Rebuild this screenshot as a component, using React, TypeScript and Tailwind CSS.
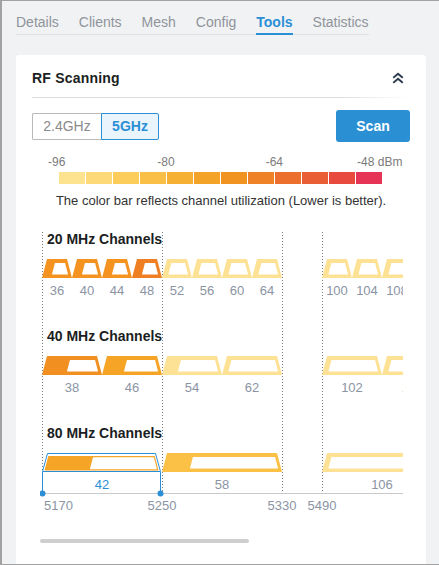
import React from 'react';

const SANS = '"Liberation Sans", Arial, Helvetica, sans-serif';
const LIGHT = '#fde195';
const BLUE = '#2b8fd6';
const LABEL = '#8b94a4';

// chart origin in page coordinates
const OX = 40;
const OY = 225;
const fx = (f: number) => (f <= 5330 ? 42 + (f - 5170) * 1.5 : 322 + (f - 5490) * 1.5) - OX;

type Ch = { n: number; color: string; off: number; sel?: boolean };
type Row = { title: string; base: number; width: number; chans: Ch[] };

const light = (ns: number[], off = 5.5): Ch[] => ns.map((n) => ({ n, color: LIGHT, off }));

const rows: Row[] = [
  {
    title: '20 MHz Channels',
    base: 19,
    width: 20,
    chans: [
      { n: 36, color: '#f4931f', off: 9 },
      { n: 40, color: '#f4931f', off: 9 },
      { n: 44, color: '#f4931f', off: 9 },
      { n: 48, color: '#ef7f23', off: 9 },
      ...light([52, 56, 60, 64, 100, 104, 108, 112, 116, 120, 124, 128, 132, 136, 140, 144]),
    ],
  },
  {
    title: '40 MHz Channels',
    base: 116,
    width: 40,
    chans: [
      { n: 38, color: '#f18f20', off: 24 },
      { n: 46, color: '#f5a426', off: 21 },
      { n: 54, color: LIGHT, off: 15 },
      ...light([62, 102, 110, 118, 126, 134, 142]),
    ],
  },
  {
    title: '80 MHz Channels',
    base: 213,
    width: 80,
    chans: [
      { n: 42, color: '#f5a426', off: 45, sel: true },
      { n: 58, color: '#fbc146', off: 27 },
      ...light([106, 122, 138]),
    ],
  },
];

function Trap({
  x0, x1, top, bot, color, off, r = 3, bt = 4, bb = 3.5,
}: {
  x0: number; x1: number; top: number; bot: number; color: string; off: number; r?: number; bt?: number; bb?: number;
}) {
  const s = 5 * ((bot - top) / 19);
  const h = bot - top;
  const xl = (y: number) => x0 + (s * (bot - y)) / h;
  const xr = (y: number) => x1 - (s * (bot - y)) / h;
  const it = top + bt;
  const ib = bot - bb;
  const outer = `${x0},${bot} ${x0 + s},${top} ${x1 - s},${top} ${x1},${bot}`;
  const inner = `${xl(ib) + off},${ib} ${xl(it) + off},${it} ${xr(it) - r},${it} ${xr(ib) - r},${ib}`;
  return (
    <g>
      <polygon points={outer} fill={color} />
      <polygon points={inner} fill="#fff" />
    </g>
  );
}

function Chart() {
  const ticks = [5170, 5250, 5330, 5490];
  return (
    <svg width={700} height={300} style={{ fontFamily: SANS, display: 'block' }}>
      {/* dotted band separators */}
      {ticks.map((f) => (
        <line key={f} x1={fx(f) + 0.5} x2={fx(f) + 0.5} y1={7} y2={268} stroke="#7d7d7d" strokeDasharray="1 2" />
      ))}
      <line x1={2} x2={700} y1={268.5} y2={268.5} stroke="#c9c9c9" />

      {rows.map((row) => {
        const top = row.base + 15;
        const bot = row.base + 34;
        return (
          <g key={row.title}>
            <text x={7} y={row.base} fontSize={14} fontWeight={700} fill="#1b1e22">
              {row.title}
            </text>
            {row.chans.map((c) => {
              const cf = 5000 + 5 * c.n;
              const x0 = fx(cf - row.width / 2);
              const x1 = fx(cf + row.width / 2);
              const cx = (x0 + x1) / 2;
              return (
                <g key={c.n}>
                  {c.sel ? (
                    <g>
                      <polygon
                        points={`${x0 + 0.5},${bot - 0.5} ${x0 + 5.5},${top + 0.5} ${x1 - 6.5},${top + 0.5} ${x1 - 1.5},${bot - 0.5}`}
                        fill="#fff"
                        stroke={BLUE}
                      />
                      <Trap x0={x0 + 2.5} x1={x1 - 3.5} top={top + 3} bot={bot - 1.5} color={c.color} off={c.off} r={1.2} bt={1.2} bb={1.2} />
                      <line x1={x0 + 0.5} x2={x0 + 0.5} y1={bot} y2={268} stroke={BLUE} />
                      <line x1={x1 - 1.5} x2={x1 - 1.5} y1={bot} y2={268} stroke={BLUE} />
                      <circle cx={x0 + 0.5} cy={268.5} r={3} fill={BLUE} />
                      <circle cx={x1 - 1.5} cy={268.5} r={3} fill={BLUE} />
                    </g>
                  ) : (
                    <Trap x0={x0} x1={x1} top={top} bot={bot} color={c.color} off={c.off} />
                  )}
                  <text x={cx} y={row.base + 51} fontSize={13} textAnchor="middle" fill={c.sel ? BLUE : LABEL}>
                    {c.n}
                  </text>
                </g>
              );
            })}
          </g>
        );
      })}

      <text x={4} y={285} fontSize={13} fill={LABEL}>5170</text>
      {ticks.slice(1).map((f) => (
        <text key={f} x={fx(f)} y={285} fontSize={13} fill={LABEL} textAnchor="middle">
          {f}
        </text>
      ))}
    </svg>
  );
}

const barColors = [
  '#fde290', '#fdd977', '#fccd5b', '#f9bf46', '#f6b135', '#f4a329',
  '#f19320', '#ef8226', '#ec6f2e', '#ea5e35', '#e84b3d', '#e63456',
];

export default function App() {
  const tabs = ['Details', 'Clients', 'Mesh', 'Config', 'Tools', 'Statistics'];
  return (
    <div
      className="box-border h-[565px] w-[439px] overflow-hidden border-t border-b border-l-2 border-[#a2a2a2] bg-[#f1f2f4] pl-[14px] pr-[13px]"
      style={{ fontFamily: SANS }}
    >
      {/* tabs */}
      <div className="mt-[11px] flex w-fit gap-5 border-b border-[#dfe1e5]">
        {tabs.map((t) => (
          <div
            key={t}
            className={`-mb-px border-b-2 pb-px text-[14px] leading-5 ${
              t === 'Tools' ? 'border-[#2b8fd6] font-bold text-[#2b8fd6]' : 'border-transparent text-[#8f949b]'
            }`}
          >
            {t}
          </div>
        ))}
      </div>

      {/* card */}
      <div className="mt-5 h-[600px] rounded-[3px] bg-white px-4 pt-[13px]">
        <div className="flex h-5 items-center justify-between pr-[6px]">
          <span className="text-[14px] font-bold tracking-[0.2px] text-[#1b1e22]">RF Scanning</span>
          <svg width="12" height="12" viewBox="0 0 12 12" fill="none" stroke="#2c3b4d" strokeWidth="2" strokeLinecap="square">
            <path d="M2 5.2 L6 1.8 L10 5.2" />
            <path d="M2 10.2 L6 6.8 L10 10.2" />
          </svg>
        </div>
        <div className="mt-[9px] h-px bg-gradient-to-r from-[#dcdcdc] from-80% to-white" />

        <div className="mt-[12px] flex h-8 items-center justify-between">
          <div className="flex h-[27px]">
            <div className="flex w-[69px] items-center justify-center rounded-l-[2px] border border-r-0 border-[#b9b9b9] text-[14px] text-[#8a8a8a]">
              2.4GHz
            </div>
            <div className="flex w-[58px] items-center justify-center rounded-r-[2px] border border-[#2b8fd6] bg-[#eaf4fc] text-[14px] font-bold text-[#2b8fd6]">
              5GHz
            </div>
          </div>
          <div className="flex h-8 w-[74px] items-center justify-center rounded-[3px] bg-[#2b8fd3] text-[14px] font-bold text-white">
            Scan
          </div>
        </div>

        <div className="mt-[13px] flex text-[12px] leading-[14px] text-[#7b7b7b]">
          <span className="ml-[16px]">-96</span>
          <span className="ml-[92px]">-80</span>
          <span className="ml-[91px]">-64</span>
          <span className="ml-[74px]">-48 dBm</span>
        </div>
        <div className="ml-[27px] mt-[3px] flex h-3 w-[323px] gap-px">
          {barColors.map((c) => (
            <div key={c} className="flex-1" style={{ backgroundColor: c }} />
          ))}
        </div>
        <div className="mt-[8px] text-center text-[13px] leading-[18px] text-[#333]">
          The color bar reflects channel utilization (Lower is better).
        </div>

        <div className="ml-[8px] mt-[15px] w-[363px] overflow-hidden">
          <Chart />
        </div>
        <div className="ml-[8px] mt-[14px] h-1 w-[209px] rounded-full bg-[#cecece]" />
      </div>
    </div>
  );
}
